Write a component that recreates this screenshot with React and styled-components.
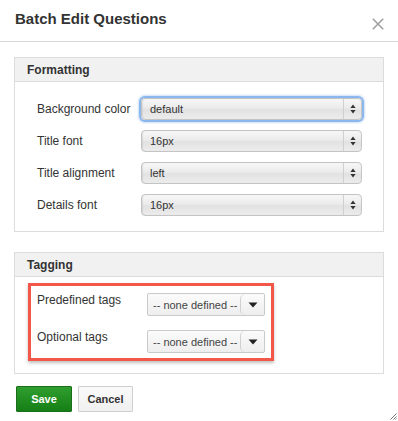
import React from "react";
import styled, { createGlobalStyle } from "styled-components";

const Global = createGlobalStyle`
  html, body {
    margin: 0;
    padding: 0;
    background: #ffffff;
  }
  body {
    font-family: "Liberation Sans", Arial, sans-serif;
    color: #333;
  }
`;

const Dialog = styled.div`
  width: 398px;
  height: 421px;
  position: relative;
  background: #fff;
  overflow: hidden;
`;

const Header = styled.div`
  height: 42px;
  display: flex;
  align-items: center;
  justify-content: space-between;
  padding: 0 14px 0 14px;
  border-bottom: 1px solid #d6d6d6;
  box-sizing: border-box;
`;

const Title = styled.h1`
  margin: 0 0 4px 1px;
  font-size: 15px;
  font-weight: bold;
  color: #333;
`;

const Close = styled.button`
  border: 0;
  background: none;
  padding: 0;
  width: 12px;
  height: 12px;
  margin: 6px 0 0;
  display: flex;
`;

const Body = styled.div`
  padding: 15px 14px 0;
  display: flex;
  flex-direction: column;
`;

const Fieldset = styled.section`
  border: 1px solid #dcdcdc;
  margin-bottom: ${p => p.$mb}px;
`;

const Legend = styled.div`
  height: 23px;
  background: #f1f1f1;
  border-bottom: 1px solid #dcdcdc;
  padding: 0 12px;
  display: flex;
  align-items: center;
  font-size: 12px;
  font-weight: bold;
  color: #333;
`;

const Rows = styled.div`
  padding: 16px 21px 15px 22px;
  display: flex;
  flex-direction: column;
  gap: 10px;
`;

const Row = styled.div`
  display: flex;
  align-items: ${p => (p.$top ? "flex-start" : "center")};
`;

const Label = styled.span`
  font-size: 12px;
  line-height: 14px;
  color: #333;
  width: ${p => p.$w}px;
  flex: none;
`;

const Select = styled.div`
  flex: 1;
  height: 22px;
  box-sizing: border-box;
  border: 1px solid #c4c4c4;
  border-radius: 4px;
  background: linear-gradient(#f7f7f7, #ebebeb 45%, #e2e2e2 55%, #ececec);
  box-shadow: inset 1px 0 1px rgba(0, 0, 0, 0.08)
    ${p => (p.$focus ? ", 0 0 0 2px #8ab8ee, 0 0 2px 3px rgba(110,160,230,.35)" : "")};
  display: flex;
  align-items: center;
  font-size: 11px;
  color: #333;
`;

const SelectText = styled.span`
  flex: 1;
  padding-left: 8px;
`;

const SpinBox = styled.span`
  width: 17px;
  height: 100%;
  border-left: 1px solid #cfcfcf;
  display: flex;
  align-items: center;
  justify-content: center;
`;

const TagArea = styled.div`
  padding: 6px 0 12px 13px;
  display: flex;
`;

const Highlight = styled.div`
  border: 3px solid #f3574a;
  box-shadow: 0 2px 3px rgba(0, 0, 0, 0.25);
  padding: 7px 6px 5px 6px;
  display: flex;
  flex-direction: column;
  gap: 14px;
`;

const TagSelect = styled.div`
  width: 118px;
  height: 23px;
  box-sizing: border-box;
  border: 1px solid #cacaca;
  border-radius: 2px;
  background: linear-gradient(#fbfbfb, #eeeeee);
  display: flex;
  align-items: center;
  font-size: 11px;
  color: #444;
`;

const TagText = styled.span`
  flex: 1;
  padding-left: 5px;
  white-space: nowrap;
`;

const TagButton = styled.span`
  width: 23px;
  height: 21px;
  border-left: 1px solid #d0d0d0;
  border-radius: 5px 0 0 5px;
  display: flex;
  align-items: center;
  justify-content: center;
`;

const Actions = styled.div`
  display: flex;
  gap: 6px;
  padding: 0 2px;
`;

const Button = styled.button`
  width: ${p => p.$w}px;
  height: 26px;
  box-sizing: border-box;
  padding: 0;
  font-family: "Liberation Sans", Arial, sans-serif;
  font-size: 11px;
  font-weight: bold;
  border-radius: 1px;
  border: 1px solid ${p => (p.$primary ? "#1b6e1b" : "#cfcfcf")};
  color: ${p => (p.$primary ? "#fff" : "#333")};
  background: ${p =>
    p.$primary ? "linear-gradient(#2f9e2f, #157f15)" : "linear-gradient(#fafafa, #f0f0f0)"};
`;

const Grip = styled.svg`
  position: absolute;
  right: 1px;
  bottom: 1px;
`;

const Spin = () => (
  <svg width="6" height="10" viewBox="0 0 6 10">
    <path d="M3 0.5L5.6 4H0.4Z M3 9.5L0.4 6H5.6Z" fill="#333" />
  </svg>
);

const Caret = () => (
  <svg width="10" height="6" viewBox="0 0 10 6">
    <path d="M0.5 0.5H9.5L5 5.5Z" fill="#222" />
  </svg>
);

const FormatRow = ({ label, value, focus }) => (
  <Row>
    <Label $w={104}>{label}</Label>
    <Select $focus={focus}>
      <SelectText>{value}</SelectText>
      <SpinBox>
        <Spin />
      </SpinBox>
    </Select>
  </Row>
);

const TagRow = ({ label }) => (
  <Row $top>
    <Label $w={110}>{label}</Label>
    <TagSelect>
      <TagText>-- none defined --</TagText>
      <TagButton>
        <Caret />
      </TagButton>
    </TagSelect>
  </Row>
);

export default function App() {
  return (
    <Dialog>
      <Global />
      <Header>
        <Title>Batch Edit Questions</Title>
        <Close aria-label="Close">
          <svg width="12" height="12" viewBox="0 0 12 12">
            <path d="M0.8 0.8L11.2 11.2M11.2 0.8L0.8 11.2" stroke="#a0a0a0" strokeWidth="1.6" />
          </svg>
        </Close>
      </Header>
      <Body>
        <Fieldset $mb={20}>
          <Legend>Formatting</Legend>
          <Rows>
            <FormatRow label="Background color" value="default" focus />
            <FormatRow label="Title font" value="16px" />
            <FormatRow label="Title alignment" value="left" />
            <FormatRow label="Details font" value="16px" />
          </Rows>
        </Fieldset>
        <Fieldset $mb={12}>
          <Legend>Tagging</Legend>
          <TagArea>
            <Highlight>
              <TagRow label="Predefined tags" />
              <TagRow label="Optional tags" />
            </Highlight>
          </TagArea>
        </Fieldset>
        <Actions>
          <Button $primary $w={56}>Save</Button>
          <Button $w={55}>Cancel</Button>
        </Actions>
      </Body>
      <Grip width="7" height="7" viewBox="0 0 7 7">
        <path d="M6.5 0.5L0.5 6.5M6.5 3.5L3.5 6.5M6.5 5.5L5.5 6.5" stroke="#777" strokeWidth="1" />
      </Grip>
    </Dialog>
  );
}
